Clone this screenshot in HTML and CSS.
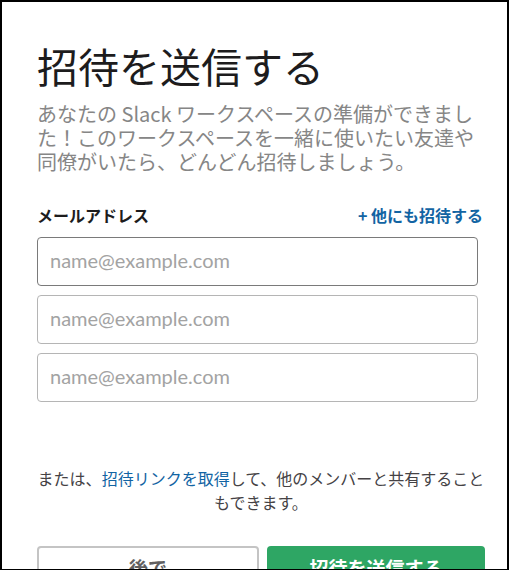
FILE: index.html
```html
<!DOCTYPE html>
<html lang="ja">
<head>
  <meta charset="UTF-8">
  <meta name="viewport" content="width=device-width, initial-scale=1.0">
  <title>招待を送信する</title>
  <link rel="stylesheet" href="styles.css">
</head>
<body>
  <div class="frame">
    <div class="invite">
      <h1>招待を送信する</h1>
      <p class="lead">あなたの Slack ワークスペースの準備ができました！このワークスペースを一緒に使いたい友達や同僚がいたら、どんどん招待しましょう。</p>

      <div class="field-head">
        <span class="label">メールアドレス</span>
        <a href="#" class="add-more">+ 他にも招待する</a>
      </div>

      <input type="email" class="email focused" placeholder="name@example.com">
      <input type="email" class="email" placeholder="name@example.com">
      <input type="email" class="email" placeholder="name@example.com">

      <p class="alt">または、<a href="#">招待リンクを取得</a>して、他のメンバーと共有することもできます。</p>

      <div class="actions">
        <button class="btn later">後で</button>
        <button class="btn send">招待を送信する</button>
      </div>
    </div>
  </div>
</body>
</html>
```

FILE: styles.css
```css
html, body {
  margin: 0;
  padding: 0;
  background: #fff;
}
body {
  font-family: Lato, "Noto Sans CJK JP", sans-serif;
  color: #1d1c1d;
}
.frame {
  box-sizing: border-box;
  width: 509px;
  height: 570px;
  border: 2px solid #000;
  border-bottom-width: 1px;
  overflow: hidden;
}
.invite {
  width: 448px;
  padding: 39px 0 0 35px;
}
h1 {
  margin: 0;
  font-size: 41px;
  line-height: 48px;
  font-weight: 400;
  font-family: "Noto Sans CJK JP", sans-serif;
  color: #1d1c1d;
}
.lead {
  margin: 13px 0 0;
  font-size: 20px;
  line-height: 24px;
  color: #868686;
  font-family: "Noto Sans CJK JP", sans-serif;
  width: 446px;
}
.field-head {
  display: flex;
  justify-content: space-between;
  align-items: center;
  margin-top: 29px;
  height: 24px;
  margin-bottom: 10px;
  width: 446px;
}
.label {
  font-size: 16px;
  font-weight: 700;
  font-family: "Noto Sans CJK JP", sans-serif;
}
.add-more {
  font-size: 16px;
  font-weight: 700;
  color: #1264a3;
  text-decoration: none;
  font-family: "Noto Sans CJK JP", sans-serif;
}
.email {
  display: block;
  box-sizing: border-box;
  width: 441px;
  height: 49px;
  margin: 0 0 9px;
  padding: 0 12px 3px;
  border: 1px solid #b5b5b5;
  border-radius: 4px;
  font-family: Lato, sans-serif;
  font-size: 20px;
  color: #1d1c1d;
  outline: none;
}
.email.focused {
  border-color: #7a7a7a;
}
.email::placeholder {
  color: #a3a3a3;
}
.alt {
  margin: 64px 0 0;
  width: 448px;
  text-align: center;
  font-size: 16px;
  line-height: 24px;
  color: #454245;
  font-family: "Noto Sans CJK JP", sans-serif;
}
.alt a {
  color: #1264a3;
  text-decoration: none;
}
.actions {
  display: flex;
  gap: 8px;
  margin-top: 32px;
}
.btn {
  flex: 1;
  height: 42px;
  border-radius: 4px;
  font-family: "Noto Sans CJK JP", sans-serif;
  font-size: 19px;
  font-weight: 700;
  cursor: pointer;
}
.later {
  background: #fff;
  border: 2px solid #c4c4c4;
  color: #616061;
}
.send {
  background: #2ea664;
  border: 0;
  color: #fff;
}
```
